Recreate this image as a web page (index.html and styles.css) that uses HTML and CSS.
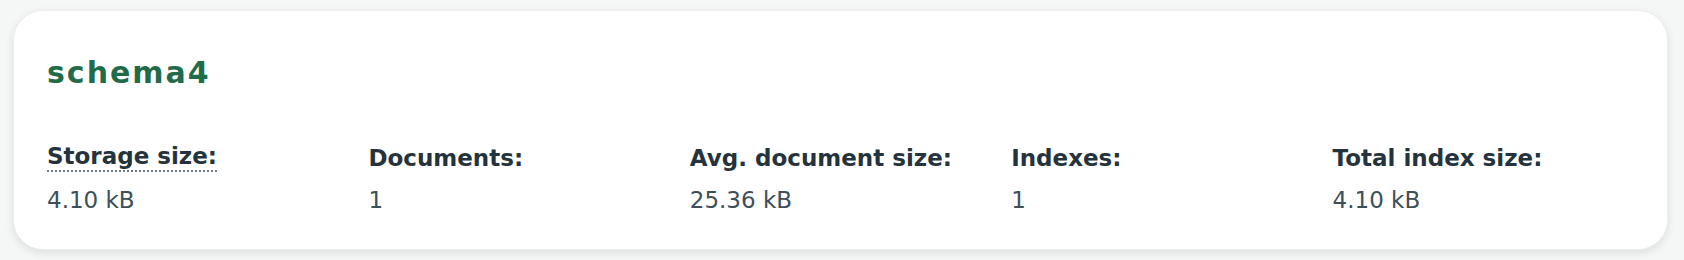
FILE: index.html
```html
<!DOCTYPE html>
<html>

<head>
  <meta charset="UTF-8">
  <title>schema4</title>
  <link rel="stylesheet" href="styles.css">
</head>

<body>
  <div class="card">
    <h2 class="card-title">schema4</h2>
    <div class="stats">
      <div class="stat">
        <div class="stat-label stat-label_hint">Storage size:</div>
        <div class="stat-value">4.10 kB</div>
      </div>
      <div class="stat">
        <div class="stat-label">Documents:</div>
        <div class="stat-value">1</div>
      </div>
      <div class="stat">
        <div class="stat-label">Avg. document size:</div>
        <div class="stat-value">25.36 kB</div>
      </div>
      <div class="stat">
        <div class="stat-label">Indexes:</div>
        <div class="stat-value">1</div>
      </div>
      <div class="stat">
        <div class="stat-label">Total index size:</div>
        <div class="stat-value">4.10 kB</div>
      </div>
    </div>
  </div>
</body>

</html>
```

FILE: styles.css
```css
body {
  margin: 0;
  padding: 10px 16px 10px 13px;
  background-color: #f5f6f6;
  font-family: "DejaVu Sans", Lato, sans-serif;
}

.card {
  background-color: #fff;
  border: 1px solid #eceeee;
  border-radius: 30px;
  box-shadow: 0 3px 8px rgba(0, 30, 43, 0.1);
  padding: 44px 33px 36px;
  height: 240px;
  box-sizing: border-box;
}

.card-title {
  margin: 0;
  color: #1f6b4a;
  font-size: 30px;
  line-height: 36px;
  font-weight: 700;
  letter-spacing: 2px;
}

.stats {
  display: grid;
  grid-template-columns: repeat(5, 1fr);
  grid-column-gap: 20px;
  margin-top: 51px;
}

.stat-label {
  color: #25333d;
  font-size: 23px;
  line-height: 32px;
  font-weight: 700;
}

.stat-label_hint {
  display: inline-block;
  line-height: 28px;
  border-bottom: 2px dotted #6b7a82;
  margin-bottom: 2px;
}

.stat-value {
  color: #3d4f58;
  font-size: 23px;
  line-height: 32px;
  margin-top: 10px;
}
```
